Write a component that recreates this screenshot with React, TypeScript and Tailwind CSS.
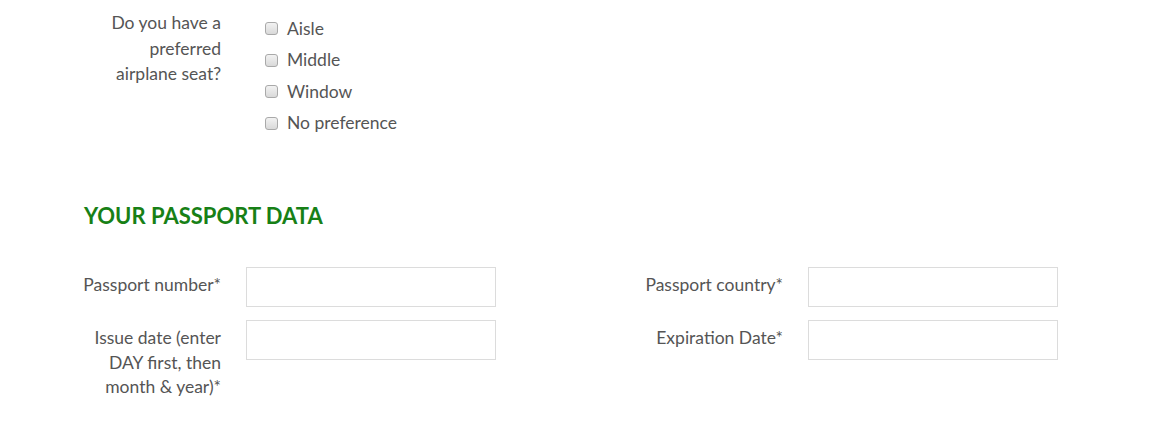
const font = { fontFamily: "Lato, 'Open Sans', sans-serif" };

function Checkbox({ label }: { label: string }) {
  return (
    <label className="flex items-center h-[31.5px] gap-[9px]">
      <span className="w-[13px] h-[13px] rounded-[3px] border border-[#a9a9a9] bg-gradient-to-b from-[#f2f2f2] to-[#d9d9d9] shrink-0" />
      <span>{label}</span>
    </label>
  );
}

function Field({ label }: { label: React.ReactNode }) {
  return (
    <div className="flex items-start">
      <div className="w-[140px] text-right pt-[6px] leading-[24.5px] shrink-0">{label}</div>
      <input className="ml-[25px] w-[250px] h-[40px] border border-[#dcdcdc] bg-white outline-none" />
    </div>
  );
}

export default function App() {
  return (
    <div className="min-h-screen bg-white text-[17.5px] text-[#555]" style={font}>
      <div className="pl-[81px]">
        <div className="flex items-start">
          <div className="ml-[15px] w-[125px] text-right leading-[25.5px] pt-[10px] shrink-0">
            Do you have a preferred airplane seat?
          </div>
          <div className="ml-[44px] pt-[13px]">
            <Checkbox label="Aisle" />
            <Checkbox label="Middle" />
            <Checkbox label="Window" />
            <Checkbox label="No preference" />
          </div>
        </div>

        <h2 className="mt-[62px] ml-[3px] text-[22px] font-bold text-[#178016] leading-[30px]">YOUR PASSPORT DATA</h2>

        <div className="mt-[36px] grid grid-cols-[562px_562px] gap-y-[13px]">
          <Field label="Passport number*" />
          <Field label="Passport country*" />
          <Field label="Issue date (enter DAY first, then month & year)*" />
          <Field label="Expiration Date*" />
        </div>
      </div>
    </div>
  );
}
